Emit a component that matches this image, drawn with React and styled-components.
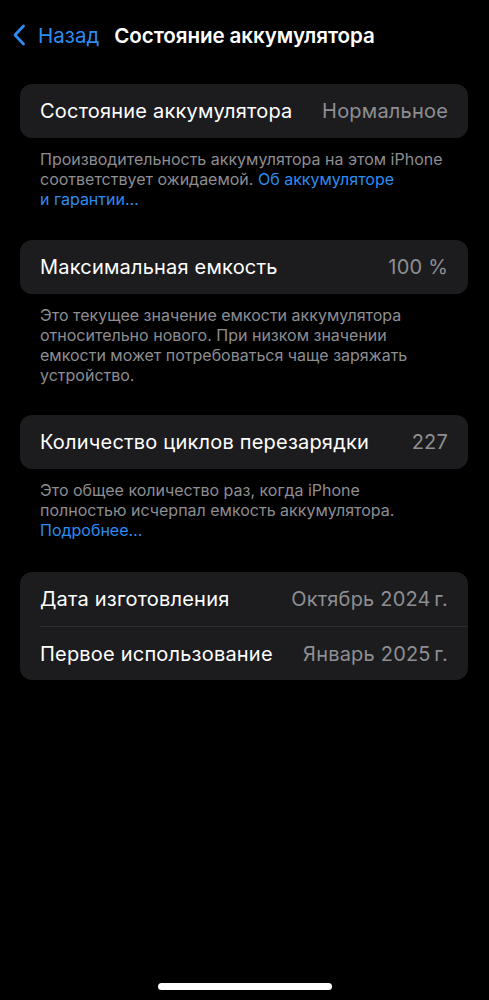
import React from 'react';
import styled, { createGlobalStyle } from 'styled-components';

const Global = createGlobalStyle`
  html, body {
    margin: 0;
    padding: 0;
    background: #000;
  }
  body {
    font-family: Inter, "Noto Sans", "Liberation Sans", sans-serif;
    -webkit-font-smoothing: antialiased;
  }
`;

const Screen = styled.div`
  width: 489px;
  height: 1000px;
  background: #000;
  display: flex;
  flex-direction: column;
  overflow: hidden;
`;

const NavBar = styled.div`
  height: 70px;
  display: flex;
  align-items: center;
  padding: 0 0 0 12px;
  box-sizing: border-box;
`;

const Back = styled.div`
  display: flex;
  align-items: center;
  gap: 12px;
  color: #2d8cf0;
  font-size: 20.5px;
  margin-right: 15px;
`;

const Title = styled.div`
  color: #fff;
  font-size: 20.6px;
  font-weight: 600;
  letter-spacing: -0.1px;
`;

const Content = styled.div`
  display: flex;
  flex-direction: column;
  padding: 14px 21px 0 20px;
`;

const Card = styled.div`
  background: #1c1c1e;
  border-radius: 12px;
  padding-left: 20px;
  margin-top: ${(p) => p.$top || 0}px;
`;

const Row = styled.div`
  height: 54px;
  display: flex;
  align-items: center;
  justify-content: space-between;
  padding-right: 20px;
  border-top: ${(p) => (p.$divider ? '1px solid #2e2e31' : 'none')};
  box-sizing: border-box;
`;

const Label = styled.span`
  color: #fff;
  font-size: 20px;
  letter-spacing: 0.2px;
`;

const Value = styled.span`
  color: #8e8e93;
  font-size: 20px;
  letter-spacing: 0.2px;
`;

const Footer = styled.p`
  margin: 11px 0 0 0;
  padding: 0 20px;
  color: #8d8d92;
  font-size: 16px;
  line-height: 20px;
  letter-spacing: 0;
  white-space: nowrap;
`;

const Link = styled.span`
  color: #2d8cf0;
`;

const Spacer = styled.div`
  flex: 1;
`;

const HomeBar = styled.div`
  width: 174px;
  height: 7px;
  border-radius: 4px;
  background: #fff;
  align-self: center;
  margin-bottom: 10px;
`;

const Chevron = () => (
  <svg width="14" height="22" viewBox="0 0 14 22" fill="none">
    <path d="M11.5 2 L3 11 L11.5 20" stroke="#2d8cf0" strokeWidth="2.8" strokeLinecap="round" strokeLinejoin="round" />
  </svg>
);

export default function App() {
  return (
    <Screen>
      <Global />
      <NavBar>
        <Back>
          <Chevron />
          Назад
        </Back>
        <Title>Состояние аккумулятора</Title>
      </NavBar>
      <Content>
        <Card>
          <Row>
            <Label>Состояние аккумулятора</Label>
            <Value>Нормальное</Value>
          </Row>
        </Card>
        <Footer>
          Производительность аккумулятора на этом iPhone
          <br />
          соответствует ожидаемой. <Link>Об аккумуляторе</Link>
          <br />
          <Link>и гарантии…</Link>
        </Footer>
        <Card $top={31}>
          <Row>
            <Label>Максимальная емкость</Label>
            <Value>100 %</Value>
          </Row>
        </Card>
        <Footer>
          Это текущее значение емкости аккумулятора
          <br />
          относительно нового. При низком значении
          <br />
          емкости может потребоваться чаще заряжать
          <br />
          устройство.
        </Footer>
        <Card $top={30}>
          <Row>
            <Label>Количество циклов перезарядки</Label>
            <Value>227</Value>
          </Row>
        </Card>
        <Footer>
          Это общее количество раз, когда iPhone
          <br />
          полностью исчерпал емкость аккумулятора.
          <br />
          <Link>Подробнее…</Link>
        </Footer>
        <Card $top={32}>
          <Row>
            <Label>Дата изготовления</Label>
            <Value>Октябрь 2024{'\u202F'}г.</Value>
          </Row>
          <Row $divider>
            <Label>Первое использование</Label>
            <Value>Январь 2025{'\u202F'}г.</Value>
          </Row>
        </Card>
      </Content>
      <Spacer />
      <HomeBar />
    </Screen>
  );
}
